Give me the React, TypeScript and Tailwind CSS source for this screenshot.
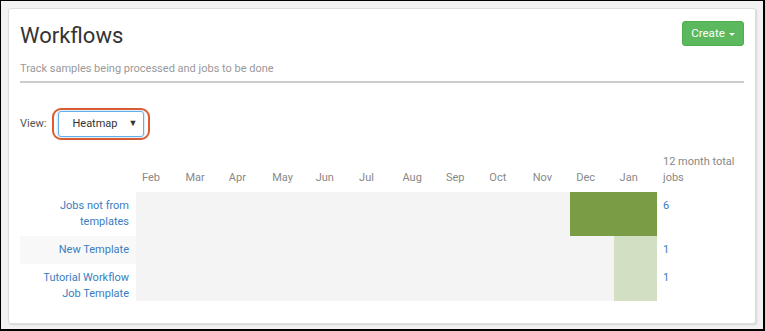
import React from 'react';

const months = ['Feb', 'Mar', 'Apr', 'May', 'Jun', 'Jul', 'Aug', 'Sep', 'Oct', 'Nov', 'Dec', 'Jan'];

type Row = {
  label: string[];
  counts: number[];
  total: number;
  height: string;
  striped: boolean;
};

const rows: Row[] = [
  {
    label: ['Jobs not from', 'templates'],
    counts: [0, 0, 0, 0, 0, 0, 0, 0, 0, 0, 3, 3],
    total: 6,
    height: 'h-[44px]',
    striped: false,
  },
  {
    label: ['New Template'],
    counts: [0, 0, 0, 0, 0, 0, 0, 0, 0, 0, 0, 1],
    total: 1,
    height: 'h-[28px]',
    striped: true,
  },
  {
    label: ['Tutorial Workflow', 'Job Template'],
    counts: [0, 0, 0, 0, 0, 0, 0, 0, 0, 0, 0, 1],
    total: 1,
    height: 'h-[37px]',
    striped: false,
  },
];

function cellColor(n: number) {
  if (n >= 3) return 'bg-[#7a9c44]';
  if (n >= 1) return 'bg-[#d3dfc2]';
  return 'bg-[#f4f4f4]';
}

function App() {
  return (
    <div
      className="w-[765px] h-[331px] bg-[#f2f2f2] border-black border-t border-l border-r-2 border-b-2 px-[7px] pt-[7px]"
      style={{ fontFamily: 'Roboto, "Liberation Sans", sans-serif' }}
    >
      <div className="h-[316px] bg-white border border-[#dddddd] rounded-[3px] shadow-[1px_1px_2px_rgba(0,0,0,0.12)] px-[11px] pt-[12px]">
        <div className="flex items-start justify-between">
          <h1 className="text-[22px] leading-[28px] text-[#333333] mt-[1px]">Workflows</h1>
          <button className="h-[25px] w-[62px] rounded-[3px] bg-[#5cb85c] border border-[#4cae4c] text-white text-[11.5px] flex items-center justify-center gap-[4px]">
            Create
            <span className="inline-block w-0 h-0 border-l-[3px] border-r-[3px] border-t-[3px] border-l-transparent border-r-transparent border-t-white mt-[1px]" />
          </button>
        </div>
        <p className="text-[11px] leading-[16px] text-[#999999] mt-[11px]">Track samples being processed and jobs to be done</p>
        <div className="h-[2px] bg-[#cccccc] mt-[4px]" />

        <div className="flex items-center mt-[24px] h-[34px]">
          <span className="text-[11px] text-[#555555] mr-[6px]">View:</span>
          <div className="rounded-[9px] border-2 border-[#e05a2b] px-[4px] py-[1px]">
            <div className="w-[86px] h-[26px] rounded-[3px] border border-[#66afe9] shadow-[0_0_3px_rgba(102,175,233,0.6)] flex items-center justify-between pl-[13px] pr-[6px]">
              <span className="text-[11px] text-[#333333]">Heatmap</span>
              <span className="text-[9px] text-[#333333]">▼</span>
            </div>
          </div>
        </div>

        <div className="mt-[13px] grid grid-cols-[116px_repeat(12,minmax(0,1fr))_87px] text-[11px] leading-[16px]">
          <div />
          {months.map((m) => (
            <div key={m} className="self-end pl-[6px] pb-[6px] text-[#888888]">
              {m}
            </div>
          ))}
          <div className="self-end pl-[6px] pb-[6px] text-[#888888]">
            12 month total
            <br />
            jobs
          </div>

          {rows.map((row) => (
            <React.Fragment key={row.label.join(' ')}>
              <div
                className={`${row.height} ${row.striped ? 'bg-[#f8f8f8]' : ''} text-right pr-[7px] pt-[6px] text-[#3a7dbf]`}
              >
                {row.label.map((line) => (
                  <div key={line}>{line}</div>
                ))}
              </div>
              {row.counts.map((n, i) => (
                <div key={i} className={`${row.height} ${cellColor(n)}`} />
              ))}
              <div className={`${row.height} pl-[6px] pt-[6px] text-[#3a7dbf]`}>{row.total}</div>
            </React.Fragment>
          ))}
        </div>
      </div>
    </div>
  );
}

export default App;
